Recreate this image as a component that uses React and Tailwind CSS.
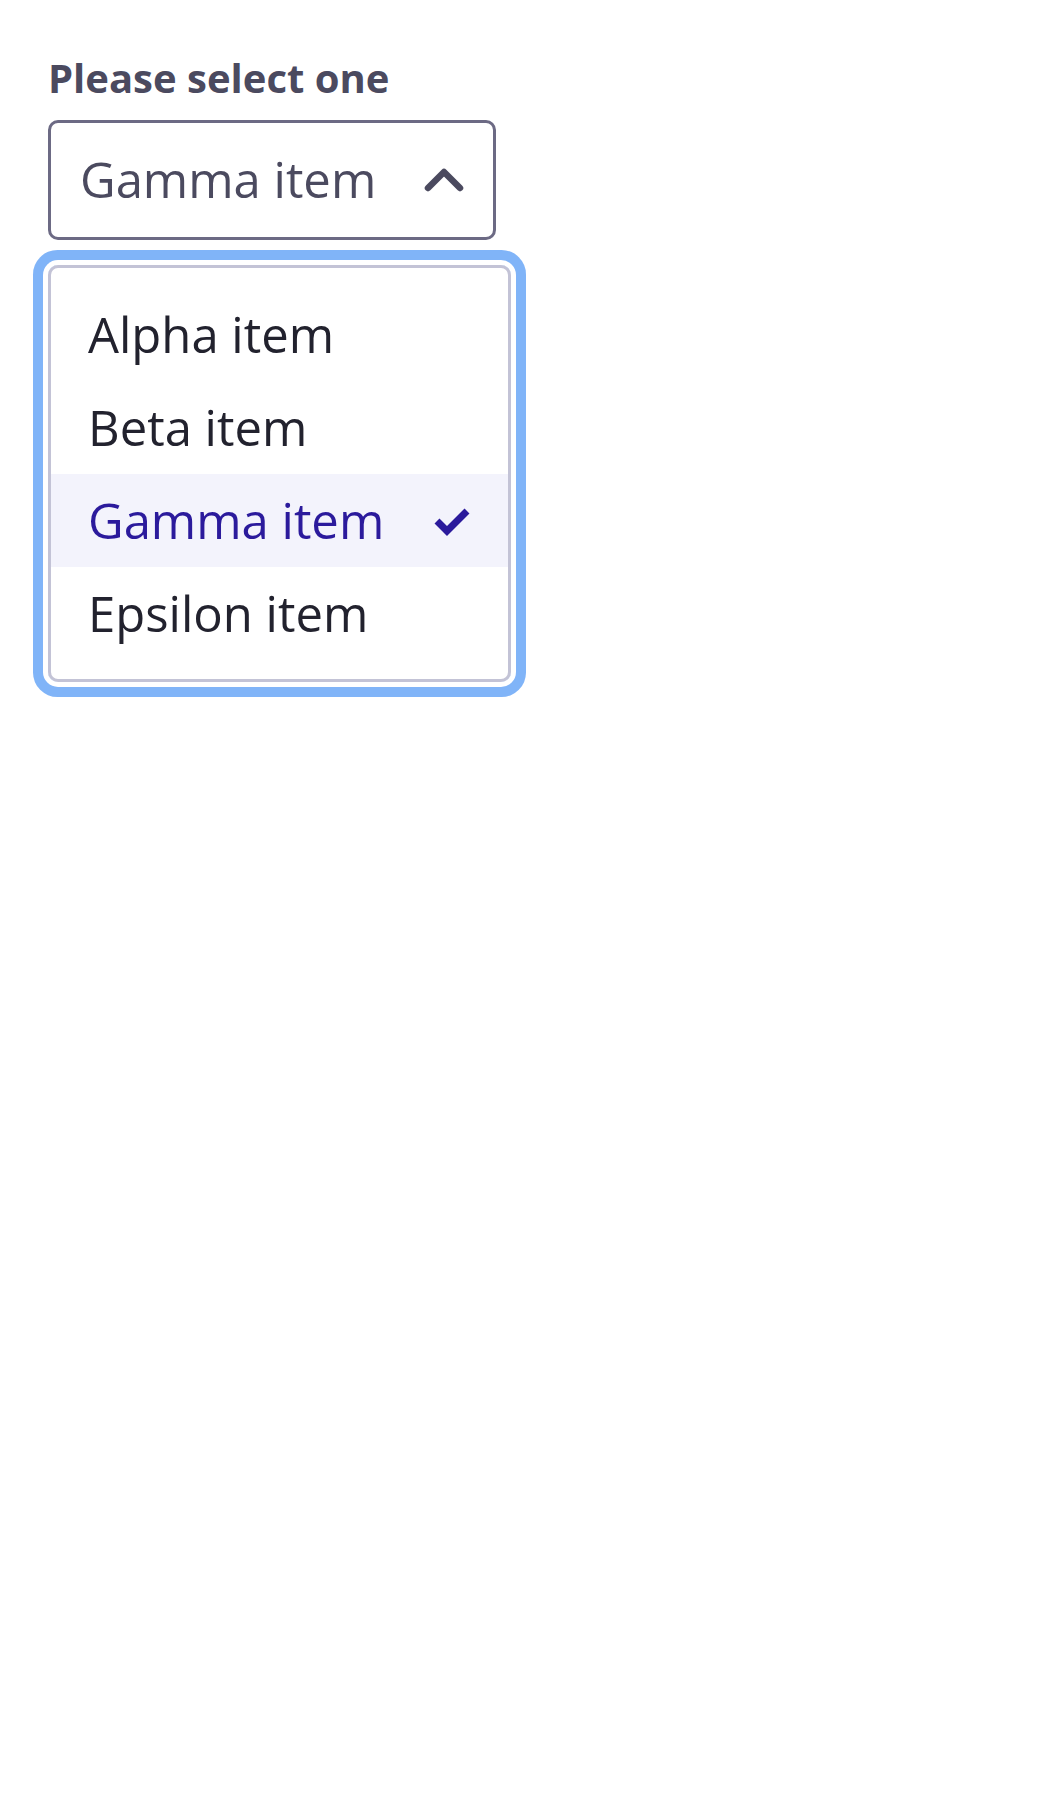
import { useState } from 'react'

const items = ['Alpha item', 'Beta item', 'Gamma item', 'Epsilon item']

function Chevron() {
  return (
    <svg width="40" height="24" viewBox="0 0 40 24" fill="none" className="shrink-0">
      <polyline points="4,20 20,4 36,20" stroke="#4b4a5f" strokeWidth="6.5" strokeLinecap="round" strokeLinejoin="round" />
    </svg>
  )
}

function Check() {
  return (
    <svg width="38" height="30" viewBox="0 0 38 30" fill="none" className="shrink-0">
      <polyline points="4,15 14,25 34,5" stroke="#2b1a9c" strokeWidth="7" />
    </svg>
  )
}

export default function App() {
  const [selected] = useState('Gamma item')

  return (
    <div className="min-h-screen bg-white pl-[48px] pt-[52px]" style={{ fontFamily: '"Open Sans", "Noto Sans", sans-serif' }}>
      <div className="text-[40px] leading-[52px] font-bold text-[#4b4a5f]">Please select one</div>

      {/* Select trigger */}
      <div className="mt-[16px] w-[448px] h-[120px] border-[3px] border-[#6c6a84] rounded-[10px] flex items-center justify-between pl-[29px] pr-[29px]">
        <span className="text-[49px] text-[#4b4a5f]">{selected}</span>
        <Chevron />
      </div>

      {/* Listbox */}
      <div className="mt-[25px] w-[463px] border-[3px] border-[#c3c3d6] rounded-[10px] pt-[20px] pb-[19px] shadow-[0_0_0_5px_#ffffff,0_0_0_15px_#80b4f8]">
        {items.map((item) => {
          const active = item === selected
          return (
            <div
              key={item}
              className={
                active
                  ? 'h-[93px] flex items-center justify-between px-[37px] bg-[#f3f3fc] text-[#2b1a9c]'
                  : 'h-[93px] flex items-center justify-between px-[37px] text-[#22222e]'
              }
            >
              <span className="text-[49px]">{item}</span>
              {active && <Check />}
            </div>
          )
        })}
      </div>
    </div>
  )
}
